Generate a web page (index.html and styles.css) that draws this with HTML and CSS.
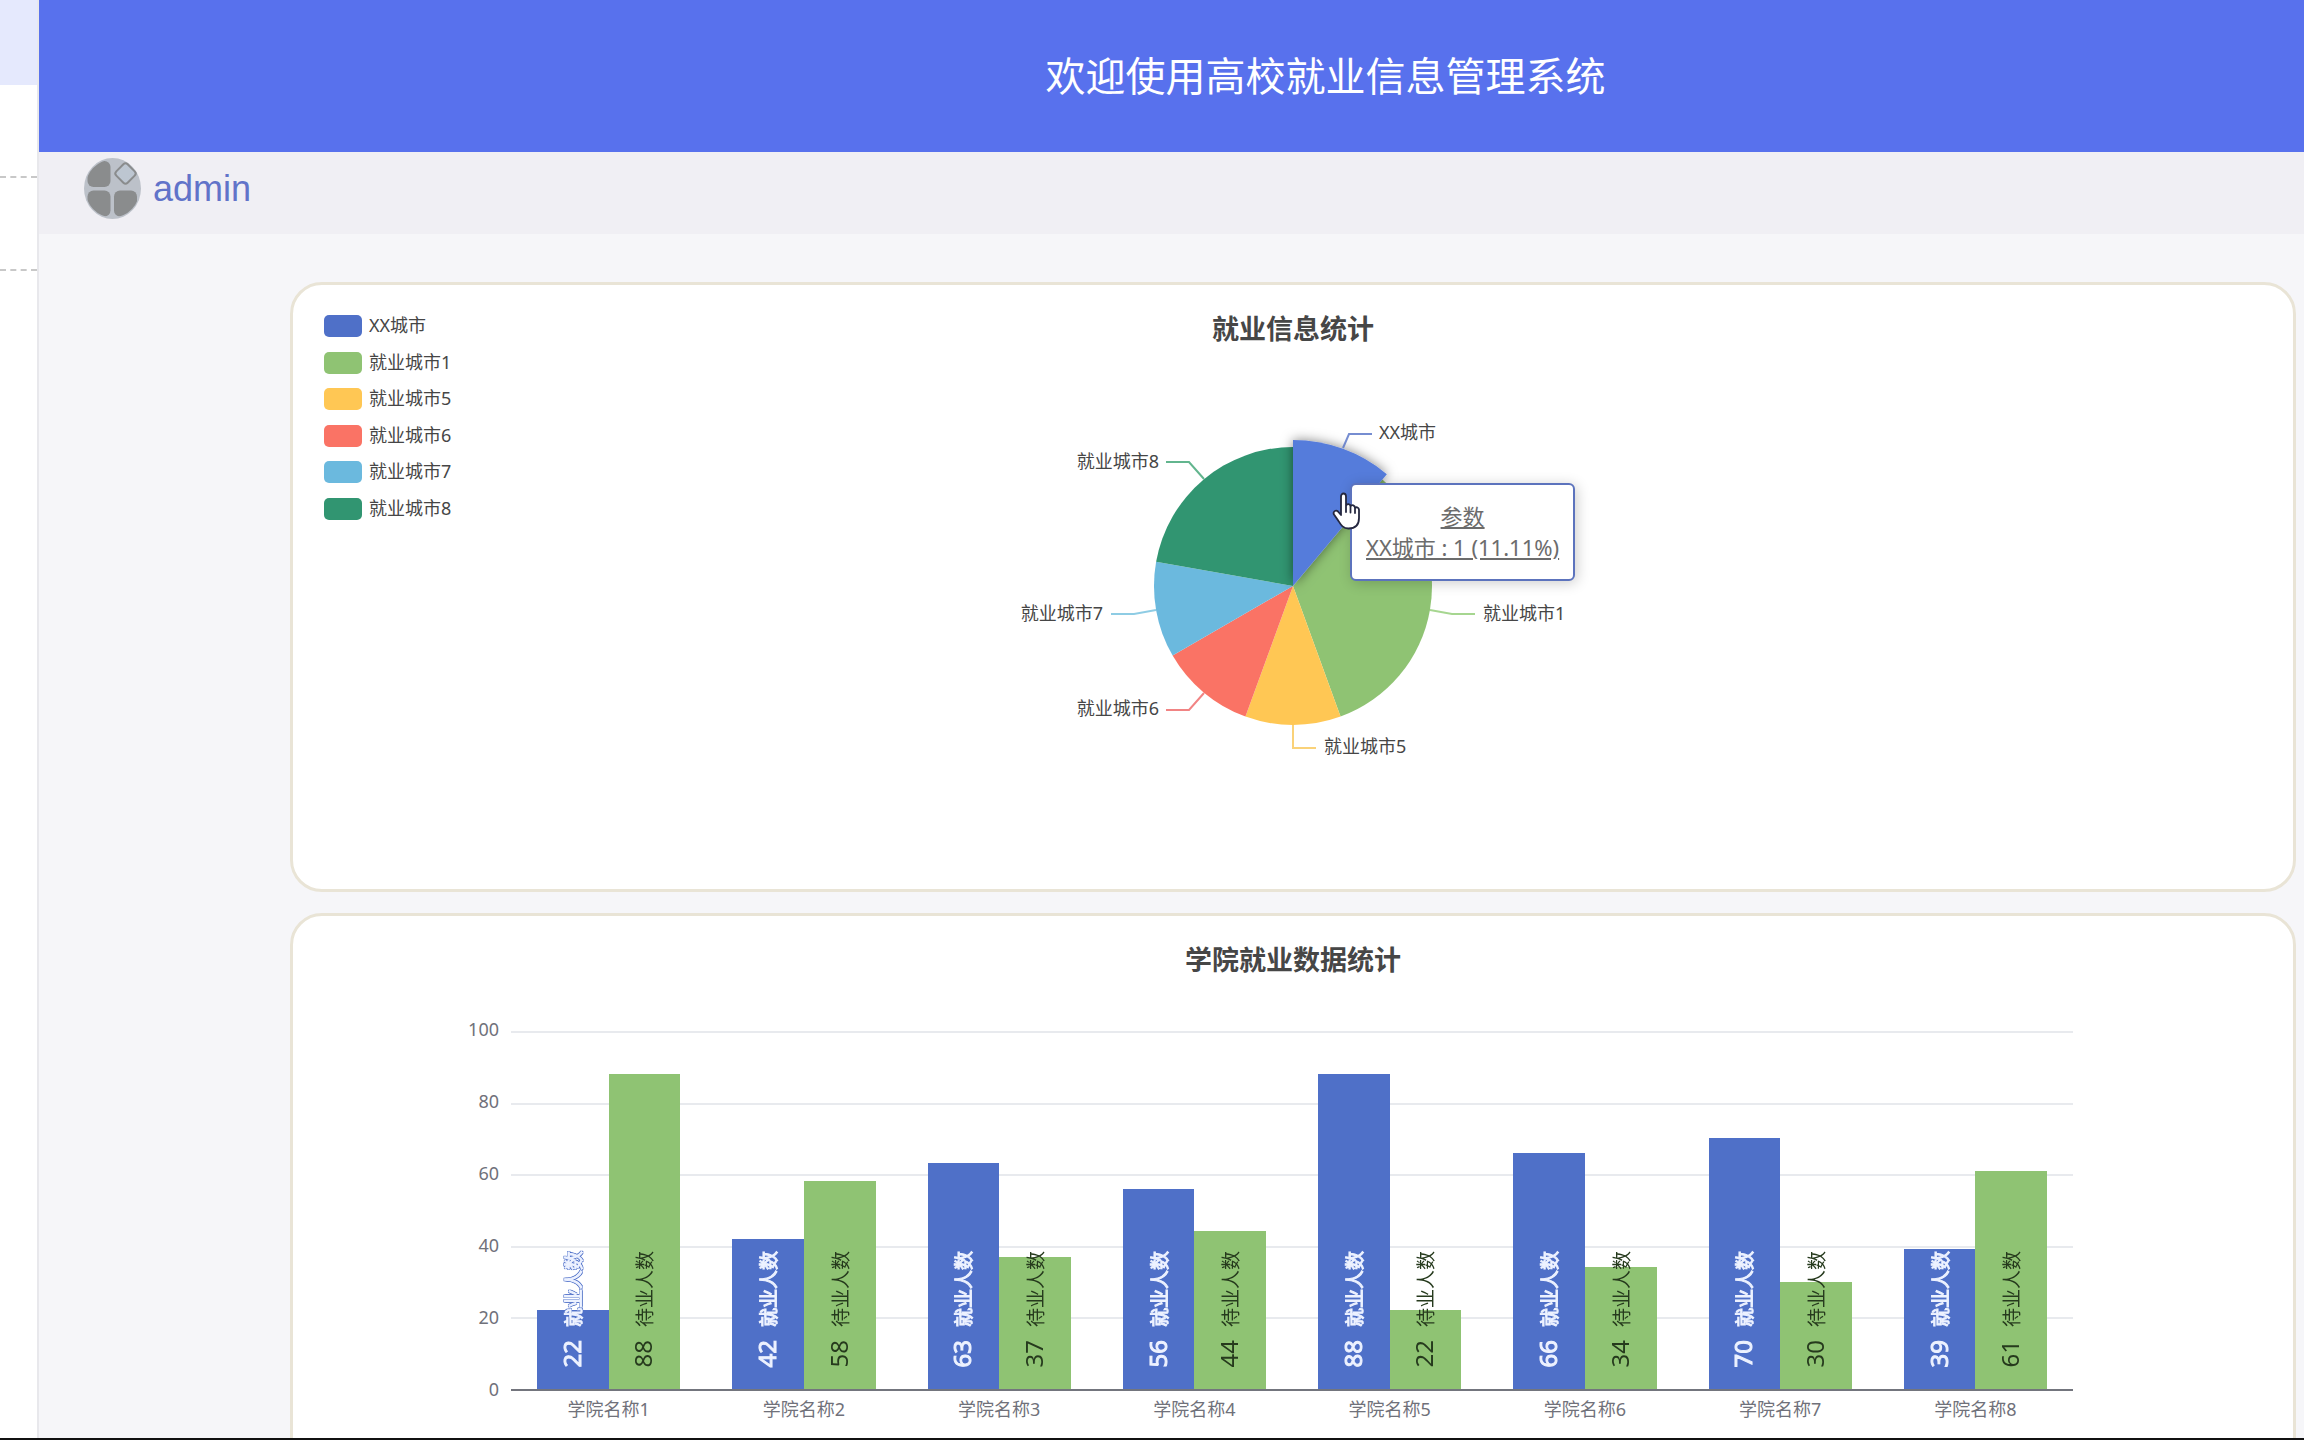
FILE: index.html
```html
<!DOCTYPE html>
<html lang="zh-CN">
<head>
<meta charset="utf-8">
<title>高校就业信息管理系统</title>
<link rel="stylesheet" href="styles.css">
</head>
<body>
<div class="app">
  <aside class="sidebar">
    <div class="side-item side-active"></div>
    <div class="side-item side-first"></div>
    <div class="side-item"></div>
  </aside>
  <main class="main">
    <header class="banner"><h1>欢迎使用高校就业信息管理系统</h1></header>
    <div class="userbar">
      <svg class="avatar" viewBox="0 0 57 61" aria-hidden="true">
        <ellipse cx="28.500" cy="30.500" rx="28.500" ry="30.500" fill="#bcc1c9"/>
        <clipPath id="inner"><ellipse cx="28.500" cy="30.500" rx="27.500" ry="29"/></clipPath>
        <g clip-path="url(#inner)" fill="#8a8c8d">
          <rect x="3.500" y="3" width="23" height="26" rx="6"/>
          <rect x="3.500" y="32.500" width="23" height="26" rx="6"/>
          <rect x="30" y="32.500" width="23" height="26" rx="6"/>
        </g>
        <rect x="33.500" y="7.500" width="16" height="16" rx="3" transform="rotate(45 41.500 15.500)" fill="#bdc6d1" stroke="#8a8c8d" stroke-width="2"/>
      </svg>
      <span class="username">admin</span>
    </div>
    <div class="cards">
      <section class="card">
        <h2>就业信息统计</h2>
        <ul class="legend">
          <li><i class="c1"></i><span>XX城市</span></li>
          <li><i class="c2"></i><span>就业城市1</span></li>
          <li><i class="c3"></i><span>就业城市5</span></li>
          <li><i class="c4"></i><span>就业城市6</span></li>
          <li><i class="c5"></i><span>就业城市7</span></li>
          <li><i class="c6"></i><span>就业城市8</span></li>
        </ul>
        <div class="pie-wrap">
          <svg class="pie" viewBox="-300 -180 600 380" width="600" height="380">
            <defs><filter id="glow" x="-30%" y="-30%" width="160%" height="160%"><feDropShadow dx="0" dy="0" stdDeviation="6" flood-color="#000" flood-opacity=".5"/></filter></defs>
            <path d="M0 0L89.350-106.480A139 139 0 0 1 47.540 130.620Z" fill="#8fc373"/>
            <path d="M0 0L47.540 130.620A139 139 0 0 1-47.540 130.620Z" fill="#ffc754"/>
            <path d="M0 0L-47.540 130.620A139 139 0 0 1-120.380 69.500Z" fill="#fa7365"/>
            <path d="M0 0L-120.380 69.500A139 139 0 0 1-136.890-24.140Z" fill="#6bb9de"/>
            <path d="M0 0L-136.890-24.140A139 139 0 0 1 0-139Z" fill="#319571"/>
            <path d="M0 0V-146A146 146 0 0 1 93.850-111.840Z" fill="#557bdb" filter="url(#glow)"/>
            <g fill="none" stroke-width="2" opacity=".8">
              <path d="M50-138L56-152H79" stroke="#5470c6"/>
              <path d="M137 24L159 28H182" stroke="#91cc75"/>
              <path d="M0 139V162H23" stroke="#fac858"/>
              <path d="M-89 107L-104 124H-127" stroke="#ee6666"/>
              <path d="M-137 24L-159 28H-182" stroke="#73c0de"/>
              <path d="M-89-107L-104-124H-127" stroke="#3ba272"/>
            </g>
            <g class="pie-label">
              <text x="86" y="-147">XX城市</text>
              <text x="190" y="34">就业城市1</text>
              <text x="31" y="167">就业城市5</text>
              <text x="-134" y="129" text-anchor="end">就业城市6</text>
              <text x="-190" y="34" text-anchor="end">就业城市7</text>
              <text x="-134" y="-118" text-anchor="end">就业城市8</text>
            </g>
          </svg>
          <div class="tooltip"><span>参数</span><span>XX城市 : 1 (11.11%)</span></div>
          <svg class="cursor" viewBox="0 0 28 38" aria-hidden="true"><path d="M9 20V4.500C9 .500 14 .500 14 4.500V14C15 11 18.500 12 18.500 14.500C20 12 23 13.500 23 16C24.500 14.500 27 15.500 27 18V26C27 33 23 36.500 16.500 36.500C11 36.500 9 33 6.500 29L2 22.500C.500 19.500 4 17.500 6 19.500L9 23ZM14 13V20M18.500 14V20.500M23 16V21" fill="#fff" stroke="#24273f" stroke-width="1.800" stroke-linejoin="round" stroke-linecap="round"/></svg>
        </div>
      </section>
      <section class="card">
        <h2>学院就业数据统计</h2>
        <div class="bar-chart">
          <div class="y-axis"><span>100</span><span>80</span><span>60</span><span>40</span><span>20</span><span>0</span></div>
          <div class="plot-col">
            <div class="plot">
              <div class="group"><div class="bar blue out" style="height:22%"><span><b>22</b> 就业人数</span></div><div class="bar green" style="height:88%"><span><b>88</b> 待业人数</span></div></div>
              <div class="group"><div class="bar blue" style="height:42%"><span><b>42</b> 就业人数</span></div><div class="bar green" style="height:58%"><span><b>58</b> 待业人数</span></div></div>
              <div class="group"><div class="bar blue" style="height:63%"><span><b>63</b> 就业人数</span></div><div class="bar green" style="height:37%"><span><b>37</b> 待业人数</span></div></div>
              <div class="group"><div class="bar blue" style="height:56%"><span><b>56</b> 就业人数</span></div><div class="bar green" style="height:44%"><span><b>44</b> 待业人数</span></div></div>
              <div class="group"><div class="bar blue" style="height:88%"><span><b>88</b> 就业人数</span></div><div class="bar green" style="height:22%"><span><b>22</b> 待业人数</span></div></div>
              <div class="group"><div class="bar blue" style="height:66%"><span><b>66</b> 就业人数</span></div><div class="bar green" style="height:34%"><span><b>34</b> 待业人数</span></div></div>
              <div class="group"><div class="bar blue" style="height:70%"><span><b>70</b> 就业人数</span></div><div class="bar green" style="height:30%"><span><b>30</b> 待业人数</span></div></div>
              <div class="group"><div class="bar blue" style="height:39%"><span><b>39</b> 就业人数</span></div><div class="bar green" style="height:61%"><span><b>61</b> 待业人数</span></div></div>
            </div>
            <div class="x-axis"><span>学院名称1</span><span>学院名称2</span><span>学院名称3</span><span>学院名称4</span><span>学院名称5</span><span>学院名称6</span><span>学院名称7</span><span>学院名称8</span></div>
          </div>
        </div>
      </section>
    </div>
  </main>
</div>
</body>
</html>
```
FILE: styles.css
```css
* { box-sizing: border-box; }
body {
  margin: 0;
  font-family: "Noto Sans", "Noto Sans CJK SC", sans-serif;
  color: #464646;
}
h1, h2, ul { margin: 0; padding: 0; font-weight: 400; }
.app {
  display: flex;
  height: 100vh;
  overflow: hidden;
  background: #f6f6f9;
  border-bottom: 2px solid #111;
}
.sidebar {
  flex: 0 0 39px;
  background: #fff;
  border-right: 2px solid #e8e8ec;
}
.side-item { height: 93px; border-bottom: 2px dashed #c8c8c8; }
.side-active { height: 85px; border: 0; background: #e5e9fd; }
.main { flex: 1; min-width: 0; }
.banner {
  display: flex;
  align-items: center;
  justify-content: center;
  height: 152px;
  padding-left: 308px;
  background: #5871ed;
  color: #fff;
}
.banner h1 { font-size: 40px; line-height: 56px; }
.userbar {
  display: flex;
  align-items: center;
  gap: 12px;
  height: 82px;
  padding: 0 45px 9px;
  background: #f0eff4;
}
.avatar { width: 57px; height: 61px; }
.username {
  font-family: "Liberation Sans", Arial, sans-serif;
  font-size: 36px;
  line-height: 40px;
  color: #6173c9;
}
.cards {
  display: grid;
  gap: 21px;
  padding: 48px 8px 48px 251px;
}
.card {
  position: relative;
  height: 610px;
  padding-top: 20px;
  background: #fff;
  border: 3px solid #e9e4d6;
  border-radius: 32px;
}
.card h2 {
  font-size: 27px;
  line-height: 48px;
  font-weight: 700;
  text-align: center;
}
.legend {
  position: absolute;
  top: 23px;
  left: 31px;
  display: flex;
  flex-direction: column;
  justify-content: space-between;
  height: 219px;
  list-style: none;
}
.legend li {
  display: flex;
  align-items: center;
  gap: 7px;
  height: 36px;
  font-size: 18px;
  line-height: 32px;
}
.legend span { padding-bottom: 2px; }
.legend i { width: 38px; height: 22px; border-radius: 5px; }
.c1 { background: #4f70c8; }
.c2 { background: #8fc373; }
.c3 { background: #ffc754; }
.c4 { background: #fa7365; }
.c5 { background: #6bb9de; }
.c6 { background: #319571; }
.pie-wrap {
  position: relative;
  width: 600px;
  height: 380px;
  margin: 53px auto 0;
}
.pie { display: block; overflow: visible; }
.pie-label { font-size: 18px; fill: #464646; }
.tooltip {
  position: absolute;
  left: 357px;
  top: 77px;
  display: flex;
  flex-direction: column;
  align-items: center;
  padding: 16px 14px;
  background: #fff;
  border: 2px solid #5c73bd;
  border-radius: 6px;
  box-shadow: 2px 2px 14px rgba(0, 0, 0, .2);
  font-size: 22px;
  line-height: 31px;
  color: #6c6c6c;
  white-space: nowrap;
}
.tooltip span { text-decoration: underline; }
.cursor {
  position: absolute;
  left: 339px;
  top: 86px;
  width: 28px;
  height: 38px;
}
.bar-chart {
  display: flex;
  padding: 33px 11% 0 8%;
  font-size: 18px;
  color: #70717a;
}
.y-axis {
  flex: 0 0 58px;
  display: flex;
  flex-direction: column;
  justify-content: space-between;
  height: 384px;
  padding-right: 12px;
  text-align: right;
  line-height: 24px;
}
.plot-col { flex: 1; min-width: 0; padding-top: 14px; }
.plot {
  display: flex;
  height: 360px;
  border-bottom: 2px solid #73757d;
  background: repeating-linear-gradient(#e8eaee 0 2px, transparent 2px 20%);
}
.group {
  flex: 1;
  display: flex;
  align-items: flex-end;
  padding: 0 26px;
}
.bar {
  flex: 1;
  display: flex;
  align-items: flex-end;
  justify-content: center;
  padding-bottom: 22px;
}
.bar span {
  flex: none;
  writing-mode: vertical-rl;
  text-orientation: sideways;
  transform: rotate(180deg);
  font-size: 19px;
  line-height: 28px;
  white-space: nowrap;
}
.bar b { font-size: 24px; font-weight: 400; margin-bottom: 8px; }
.blue { background: #4f70c8; color: #edf2ff; }
.blue span { -webkit-text-stroke: 1px #edf2ff; }
.out span {
  text-shadow: 1px 0 #4f70c8, -1px 0 #4f70c8, 0 1px #4f70c8, 0 -1px #4f70c8,
    1px 1px #4f70c8, -1px -1px #4f70c8, 1px -1px #4f70c8, -1px 1px #4f70c8;
}
.green { background: #8fc373; color: #263a1d; }
.x-axis {
  display: flex;
  padding-top: 5px;
  line-height: 26px;
  text-align: center;
}
.x-axis span { flex: 1; }
```
